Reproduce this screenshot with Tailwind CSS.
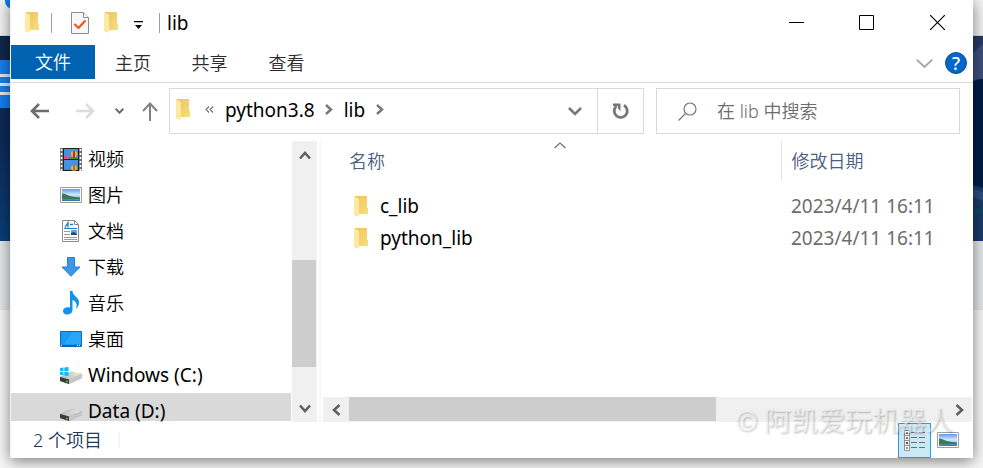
<!DOCTYPE html>
<html lang="zh-CN">

<head>
    <meta charset="UTF-8" />
    <meta name="viewport" content="width=device-width, initial-scale=1.0" />
    <title>lib</title>
    <script src="https://cdn.jsdelivr.net/npm/@tailwindcss/browser@4"></script>
</head>

<body class="relative h-screen overflow-hidden bg-[#f7f7f7] font-['Noto_Sans','Noto_Sans_CJK_SC',sans-serif] text-[18px] leading-6 font-[350] text-black">

    <!-- Shared icons -->
    <svg class="absolute h-0 w-0">
        <defs>
            <linearGradient id="folderBack" x1="0" y1="0" x2="1" y2="1">
                <stop offset="0" stop-color="#e9c461" />
                <stop offset="1" stop-color="#fbdc7f" />
            </linearGradient>
            <linearGradient id="sky" x1="0" y1="0" x2="0" y2="1">
                <stop offset="0" stop-color="#5b9df0" />
                <stop offset="0.5" stop-color="#d6ecfb" />
                <stop offset="0.75" stop-color="#7fb3d4" />
                <stop offset="1" stop-color="#2f6f9f" />
            </linearGradient>
            <linearGradient id="driveTop" x1="0" y1="0" x2="1" y2="0">
                <stop offset="0" stop-color="#b9b9b9" />
                <stop offset="1" stop-color="#ececec" />
            </linearGradient>
            <symbol id="folder" viewBox="0 0 14 21">
                <path d="M1 0h12v11l1 1v6H4z" fill="url(#folderBack)" />
                <path d="M0 0l5 3v15l-1 3-4-2z" fill="#ffe8a0" />
            </symbol>
            <symbol id="picture" viewBox="0 0 22 16">
                <path d="M.5.5h21v15H.5z" fill="#fff" stroke="#9d9d9d" />
                <path d="M2 2h18v12H2z" fill="url(#sky)" />
                <path d="M2 6.500c3 0 5 1.500 8 2.500s6 1 10 1.500V12c-6-.5-10 1-18 0z" fill="#3c7757" />
            </symbol>
            <symbol id="drive" viewBox="0 0 22 12">
                <path d="M0 5L11 0l11 2v4L9 12 0 9z" fill="#9b9b9b" />
                <path d="M0 5L11 0l11 2L9 7.500z" fill="url(#driveTop)" />
                <path d="M22 2v4L9 12V7.500z" fill="#c6c6c6" />
                <path d="M0 5l9 2.500V12L0 9z" fill="#3b3b3b" />
                <path d="M6 8.500l2 .5v1.500L6 10z" fill="#3ed13e" />
            </symbol>
        </defs>
    </svg>

    <!-- Desktop behind the window -->
    <div class="absolute inset-0 flex flex-col">
        <div class="relative h-9 border-b border-[#d9dadb] bg-[#f3f3f3]">
            <span class="absolute top-0 left-[5px] h-[9px] w-2 rounded-bl-lg bg-[#0b7bf0]"></span>
        </div>
        <div class="flex h-[205px] justify-between bg-[#0a2348]">
            <div class="flex w-5 flex-col bg-gradient-to-b from-[#11264b] via-[#0c2b58] to-[#0a3e78] pt-6">
                <div class="flex flex-col gap-[3px] bg-[#dfe9f5]">
                    <span class="h-[14px] bg-[#1680ee]"></span>
                    <span class="h-[6px] bg-[#1680ee]"></span>
                    <span class="h-[6px] bg-[#1680ee]"></span>
                    <span class="h-[13px] bg-[#1680ee]"></span>
                </div>
            </div>
            <svg class="h-[205px] w-5" viewBox="0 0 20 205">
                <path d="M0 0h20v205H0z" fill="#021b45" />
                <path d="M0 0h20v43c-5 0-8 1-20 6z" fill="#3d4f7c" />
                <path d="M0 0h20v8L0 26z" fill="#2a3a63" />
                <path d="M0 146l20 6v53H0z" fill="#1a3a69" />
                <path d="M0 149l20 7v9L0 158z" fill="#2c4d7e" />
                <path d="M0 175l20-4v8L0 182z" fill="#124469" />
            </svg>
        </div>
        <div class="h-[69px] bg-[#e5e7e8]"></div>
        <div class="flex-1 bg-[#f7f7f7]"></div>
    </div>

    <!-- Explorer window -->
    <div class="relative flex h-full flex-col px-[10px] pb-[10px]">
        <div class="relative flex min-h-0 flex-1 flex-col border-l border-[#f3f3f3] bg-white shadow-[0_3px_14px_rgba(0,0,0,0.5)]">

            <!-- Title bar -->
            <header class="flex h-[45px] shrink-0 items-center justify-between pl-[14px]">
                <div class="flex items-center">
                    <svg class="h-[21px] w-[14px]"><use href="#folder" /></svg>
                    <span class="ml-3 h-5 w-px bg-[#a0a0a0]"></span>
                    <button aria-label="属性" class="ml-[19px]">
                        <svg class="block h-[22px] w-[18px]" viewBox="0 0 18 22">
                            <path d="M.5.5h12l5 5v16H.5z" fill="#f8f8f8" stroke="#8c8c8c" />
                            <path d="M12.500.5v5h5" fill="#fff" stroke="#8c8c8c" />
                            <path d="M3.500 12l4 4 7-7.500" fill="none" stroke="#f0561a" stroke-width="2.200" />
                        </svg>
                    </button>
                    <button aria-label="新建文件夹" class="ml-[15px]">
                        <svg class="block h-[21px] w-[14px]"><use href="#folder" /></svg>
                    </button>
                    <button aria-label="自定义快速访问工具栏" class="ml-4 pt-1">
                        <svg class="block h-2 w-[9px]" viewBox="0 0 9 8">
                            <path d="M0 0h9v1.200H0zM1 4h7L4.500 8z" />
                        </svg>
                    </button>
                    <span class="ml-4 h-5 w-px bg-[#a0a0a0]"></span>
                    <h1 class="ml-[7px] text-[19px] font-normal">lib</h1>
                </div>
                <div class="flex h-full">
                    <button aria-label="最小化" class="grid w-[70px] place-items-center">
                        <svg class="h-[15px] w-[15px]" viewBox="0 0 15 15"><path d="M0 7.500h15" stroke="#000" /></svg>
                    </button>
                    <button aria-label="最大化" class="grid w-[70px] place-items-center">
                        <svg class="h-[15px] w-[15px]" viewBox="0 0 15 15"><path d="M.5.5h14v14H.5z" fill="none" stroke="#000" /></svg>
                    </button>
                    <button aria-label="关闭" class="grid w-[72px] place-items-center">
                        <svg class="h-[15px] w-[15px]" viewBox="0 0 15 15"><path d="M0 0l15 15M15 0L0 15" stroke="#000" stroke-width="1.200" /></svg>
                    </button>
                </div>
            </header>

            <!-- Ribbon tabs -->
            <nav class="flex h-[38px] shrink-0 items-start justify-between border-b border-[#dadada] pr-[6px] text-[#2b2b2b]">
                <div class="flex h-9">
                    <button class="h-[34px] w-[84px] bg-[#0063b1] text-white">文件</button>
                    <button class="w-[76px]">主页</button>
                    <button class="w-[77px]">共享</button>
                    <button class="w-[77px]">查看</button>
                </div>
                <div class="flex h-9 items-center gap-3">
                    <button aria-label="展开功能区">
                        <svg class="block h-[9px] w-[17px]" viewBox="0 0 17 9"><path d="M.7.700L8.500 8l7.800-7.300" fill="none" stroke="#a3a3a3" stroke-width="1.800" /></svg>
                    </button>
                    <button aria-label="帮助" class="h-[22px] w-[22px] rounded-full border border-[#0a4f94] bg-[#0067cb] text-[18px] leading-5 font-medium text-white">?</button>
                </div>
            </nav>

            <!-- Address bar -->
            <div class="flex shrink-0 items-stretch pt-[5px] pr-[13px] pb-[7px]">
                <div class="flex w-[158px] items-center pl-[19px]">
                    <button aria-label="后退">
                        <svg class="block h-4 w-[19px]" viewBox="0 0 19 16"><path d="M19 8H2M9 1L2 8l7 7" fill="none" stroke="#6d6d6d" stroke-width="2.600" /></svg>
                    </button>
                    <button aria-label="前进" class="ml-[27px]">
                        <svg class="block h-4 w-[19px]" viewBox="0 0 19 16"><path d="M0 8h17M10 1l7 7-7 7" fill="none" stroke="#dcdcdc" stroke-width="2.600" /></svg>
                    </button>
                    <button aria-label="最近浏览的位置" class="ml-5">
                        <svg class="block h-[6px] w-[9px]" viewBox="0 0 9 6"><path d="M.7.700l3.800 4 3.800-4" fill="none" stroke="#6d6d6d" stroke-width="2" /></svg>
                    </button>
                    <button aria-label="上移" class="ml-[18px]">
                        <svg class="block h-[19px] w-[16px]" viewBox="0 0 16 19"><path d="M8 19V1.500M1 9l7-7.500L15 9" fill="none" stroke="#808080" stroke-width="2" /></svg>
                    </button>
                </div>
                <div class="flex h-[46px] flex-1 border border-[#d9d9d9] pl-[6px]">
                    <div class="flex flex-1 items-center pb-[3px] text-[19px] font-normal">
                        <svg class="h-[21px] w-[14px]"><use href="#folder" /></svg>
                        <button aria-label="上级位置" class="ml-[15px]">
                            <svg class="block h-[7px] w-[9px]" viewBox="0 0 9 7"><path d="M4 .5l-3 3 3 3M8 .5l-3 3 3 3" fill="none" stroke="#6d6d6d" stroke-width="1.100" /></svg>
                        </button>
                        <button class="ml-[11px]">python3.8</button>
                        <svg class="ml-[10px] h-[11px] w-2" viewBox="0 0 8 11"><path d="M1 1l5 4.500L1 10" fill="none" stroke="#777" stroke-width="2.400" /></svg>
                        <button class="ml-[11px]">lib</button>
                        <svg class="ml-[11px] h-[11px] w-2" viewBox="0 0 8 11"><path d="M1 1l5 4.500L1 10" fill="none" stroke="#777" stroke-width="2.400" /></svg>
                    </div>
                    <button aria-label="以前的位置" class="w-[44px]">
                        <svg class="mx-auto h-[9px] w-[14px]" viewBox="0 0 14 9"><path d="M1 1l6 6 6-6" fill="none" stroke="#777" stroke-width="2.600" /></svg>
                    </button>
                    <button aria-label="刷新" class="w-[46px] border-l border-[#d9d9d9]">
                        <svg class="mx-auto h-[17px] w-[18px]" viewBox="0 0 18 17">
                            <path d="M12 2.300a6.500 6.500 0 1 1-7.500.7" fill="none" stroke="#777" stroke-width="2.800" />
                            <path d="M1 .5h7.500V8l-2.500-2.500V3H1z" fill="#777" />
                        </svg>
                    </button>
                </div>
                <label class="ml-3 flex h-[46px] w-[304px] items-center gap-5 border border-[#d9d9d9] pr-3 pl-[21px]">
                    <svg class="h-[19px] w-[19px] shrink-0" viewBox="0 0 19 19"><path d="M.5 18.500l7-7" stroke="#777" stroke-width="1.300" /><circle cx="12" cy="7" r="6" fill="none" stroke="#777" stroke-width="1.200" /></svg>
                    <input type="text" aria-label="搜索" placeholder="在 lib 中搜索" class="min-w-0 flex-1 outline-none placeholder:text-[#6d6d6d]" />
                </label>
            </div>

            <main class="flex min-h-0 flex-1">
                <!-- Navigation pane -->
                <ul class="w-[280px] shrink-0 leading-5">
                    <li class="flex h-9 items-center gap-[6px] pl-[49px]">
                        <svg class="h-[23px] w-[22px]" viewBox="0 0 22 23">
                            <path d="M0 0h22v23H0z" fill="#6e6e6e" />
                            <path d="M3 0h16v23H3z" fill="#222" />
                            <path d="M4 1h14v10H4zM4 12h14v10H4z" fill="#4a8fe6" />
                            <path d="M4 9l3-2 3 2v2H4z" fill="#e0508a" />
                            <path d="M9 9l4 1h5v1H9z" fill="#3a8b3a" />
                            <circle cx="14" cy="6" r="3.200" fill="#f0b21c" />
                            <path d="M13 3h2v7h-2z" fill="#bd3020" />
                            <circle cx="14" cy="20" r="2.800" fill="#f0c21c" />
                            <path d="M13 17.500h2V22h-2zM4 21h5v1H4z" fill="#bd6020" />
                            <path d="M1.500 1v22M20.500 1v22" stroke="#fff" stroke-width="1.600" stroke-dasharray="2 2" />
                        </svg>
                        <a href="#">视频</a>
                    </li>
                    <li class="flex h-9 items-center gap-[6px] pl-[49px]">
                        <svg class="h-4 w-[22px]"><use href="#picture" /></svg>
                        <a href="#">图片</a>
                    </li>
                    <li class="flex h-9 items-center gap-[6px] pl-[49px]">
                        <svg class="h-[22px] w-[22px]" viewBox="0 0 22 22">
                            <path d="M2.500.5h12l4 4v17h-16z" fill="#fff" stroke="#8a8a8a" />
                            <path d="M14.500.5v4h4" fill="none" stroke="#8a8a8a" />
                            <path d="M5 7.500l3-5v5M10 4.500h3" fill="none" stroke="#1b7fc4" stroke-width="1.300" />
                            <path d="M4 8.500h13" stroke="#1b7fc4" />
                            <path d="M4 11.500h6M4 14.500h6M4 17.500h13M4 19.500h13" stroke="#9c9c9c" />
                            <path d="M11 10h6v5h-6z" fill="#6aa5d8" />
                            <path d="M11 13l3-1 3 2v1h-6z" fill="#1d4e79" />
                        </svg>
                        <a href="#">文档</a>
                    </li>
                    <li class="flex h-9 items-center gap-[6px] pl-[49px]">
                        <svg class="h-5 w-[22px]" viewBox="0 0 22 20"><path d="M7.500.5h7V10H20l-9 9.300L2 10h5.500z" fill="#3b97e8" stroke="#2b7fd0" /></svg>
                        <a href="#">下载</a>
                    </li>
                    <li class="flex h-9 items-center gap-[6px] pl-[49px]">
                        <svg class="h-6 w-[22px]" viewBox="0 0 22 24">
                            <path d="M10 0h2.500c0 5 6.500 6 6.500 11 0 3-1 5-3 7 1-3 1.500-7-3.500-9v10c0 2.800-2.500 4.500-5.500 4.500C4.500 23.500 3 22 3 20c0-2.500 3-4.500 7-3.500z" fill="#0f93ea" />
                        </svg>
                        <a href="#">音乐</a>
                    </li>
                    <li class="flex h-9 items-center gap-[6px] pl-[49px]">
                        <svg class="h-4 w-[22px]" viewBox="0 0 22 16">
                            <path d="M.5.5h21v15H.5z" fill="#179af5" stroke="#0d6cb4" />
                            <path d="M13 1h8v12H4z" fill="#2ba5fa" />
                            <path d="M1 14.500h20" stroke="#0b5a9b" />
                            <path d="M1 14.500h1M17 14.500h1M19 14.500h1" stroke="#fff" />
                        </svg>
                        <a href="#">桌面</a>
                    </li>
                    <li class="flex h-9 items-center gap-[6px] pl-[49px] text-[19px] font-normal">
                        <svg class="h-[17px] w-[22px]" viewBox="0 0 22 17">
                            <use href="#drive" y="5" width="22" height="12" />
                            <path d="M0 1l3.500-.5V4H0zM4.300.4L8.500 0v4H4.300zM0 4.800h3.500v3.400L0 7.800zM4.300 4.800h4.200V9l-4.200-.6z" fill="#14b6f5" />
                        </svg>
                        <a href="#">Windows (C:)</a>
                    </li>
                    <li class="flex h-7 items-end gap-[6px] bg-[#d9d9d9] pl-[49px] text-[19px] font-normal">
                        <svg class="h-[17px] w-[22px]" viewBox="0 0 22 17"><use href="#drive" y="5" width="22" height="12" /></svg>
                        <a href="#">Data (D:)</a>
                    </li>
                </ul>

                <!-- Vertical scrollbar -->
                <div class="ml-px flex w-[25px] shrink-0 flex-col items-center bg-[#f0f0f0]">
                    <button aria-label="向上滚动" class="h-[28px]">
                        <svg class="h-[9px] w-3" viewBox="0 0 12 9"><path d="M1 7.500L6 2l5 5.500" fill="none" stroke="#606060" stroke-width="2.600" /></svg>
                    </button>
                    <div class="flex w-full flex-1 flex-col pr-px">
                        <span class="grow-[91]"></span>
                        <span class="grow-[107] bg-[#cdcdcd]"></span>
                        <span class="grow-[28]"></span>
                    </div>
                    <button aria-label="向下滚动" class="h-[27px]">
                        <svg class="h-[9px] w-3" viewBox="0 0 12 9"><path d="M1 1.500L6 7l5-5.500" fill="none" stroke="#606060" stroke-width="2.600" /></svg>
                    </button>
                </div>
                <div class="mr-[2px] ml-[2px] w-[2px] shrink-0 bg-[#f7f7f7]"></div>

                <!-- File list -->
                <section class="flex min-w-0 flex-1 flex-col justify-between pr-px">
                    <div class="relative">
                        <svg class="absolute top-px left-[231px] h-[7px] w-3" viewBox="0 0 12 7"><path d="M.5 6L6 1l5.500 5" fill="none" stroke="#6d6d6d" stroke-width="1.200" /></svg>
                        <table class="w-full table-fixed border-collapse text-left">
                            <thead>
                                <tr class="h-10 text-[#4a607e]">
                                    <th class="border-r border-[#e5e5e5] p-0 pl-[26px] font-[350]">名称</th>
                                    <th class="w-[191px] p-0 pl-[10px] font-[350]">修改日期</th>
                                </tr>
                            </thead>
                            <tbody class="text-[19px] font-normal">
                                <tr class="h-[9px]"></tr>
                                <tr class="h-8">
                                    <td class="p-0 pl-[31px]">
                                        <div class="flex items-center gap-3">
                                            <svg class="h-[21px] w-[14px]"><use href="#folder" /></svg>
                                            <a href="#">c_lib</a>
                                        </div>
                                    </td>
                                    <td class="p-0 pl-[10px] text-[#6d6d6d]">2023/4/11 16:11</td>
                                </tr>
                                <tr class="h-8">
                                    <td class="p-0 pl-[31px]">
                                        <div class="flex items-center gap-3">
                                            <svg class="h-[21px] w-[14px]"><use href="#folder" /></svg>
                                            <a href="#">python_lib</a>
                                        </div>
                                    </td>
                                    <td class="p-0 pl-[10px] text-[#6d6d6d]">2023/4/11 16:11</td>
                                </tr>
                            </tbody>
                        </table>
                    </div>

                    <!-- Horizontal scrollbar -->
                    <div class="flex h-[25px] items-center bg-[#f0f0f0]">
                        <button aria-label="向左滚动" class="w-[26px]">
                            <svg class="mx-auto h-3 w-[9px]" viewBox="0 0 9 12"><path d="M7.500 1L2 6l5.500 5" fill="none" stroke="#606060" stroke-width="2.600" /></svg>
                        </button>
                        <div class="flex h-full flex-1 pb-px">
                            <span class="grow-[367] bg-[#cdcdcd]"></span>
                            <span class="grow-[230]"></span>
                        </div>
                        <button aria-label="向右滚动" class="w-[26px]">
                            <svg class="mx-auto h-3 w-[9px]" viewBox="0 0 9 12"><path d="M1.500 1L7 6l-5.500 5" fill="none" stroke="#606060" stroke-width="2.600" /></svg>
                        </button>
                    </div>
                </section>
            </main>

            <!-- Status bar -->
            <footer class="flex h-9 shrink-0 items-center justify-between pr-[14px] pl-[22px] text-[#1e395b]">
                <div class="flex items-center gap-4">
                    <span>2 个项目</span>
                    <span class="h-4 w-[2px] bg-[#f5f5f5]"></span>
                </div>
                <div class="flex items-center gap-[6px]">
                    <button aria-label="详细信息" class="grid h-[35px] w-[33px] place-items-center border border-[#26a0da] bg-[#cbe8f6]">
                        <svg class="h-[21px] w-[21px]" viewBox="0 0 21 21">
                            <path d="M.5.500h5v20h-5zM.5 5.500h5M.5 10.500h5M.5 15.500h5" fill="#fff" stroke="#8f8f8f" />
                            <path d="M2 2h2v2H2z" fill="#2a78c0" />
                            <path d="M2 7h2v2H2z" fill="#7c8a2c" />
                            <path d="M2 12h2v2H2z" fill="#b02a1c" />
                            <path d="M2 17h2v2H2z" fill="#7d9c86" />
                            <path d="M7 2.500h6M15 2.500h6M7 7.500h6M15 7.500h6M7 12.500h6M15 12.500h6M7 17.500h6M15 17.500h6" stroke="#6e6e6e" />
                        </svg>
                    </button>
                    <button aria-label="大缩略图">
                        <svg class="block h-4 w-[22px]"><use href="#picture" /></svg>
                    </button>
                </div>
            </footer>

            <!-- Watermark -->
            <p class="pointer-events-none absolute right-5 bottom-[22px] font-['Noto_Sans_CJK_SC',sans-serif] text-[27px] leading-8 font-normal whitespace-nowrap text-white/50 [text-shadow:1px_1px_2px_rgba(0,0,0,0.25)]">© 阿凯爱玩机器人</p>
        </div>
    </div>
</body>

</html>
